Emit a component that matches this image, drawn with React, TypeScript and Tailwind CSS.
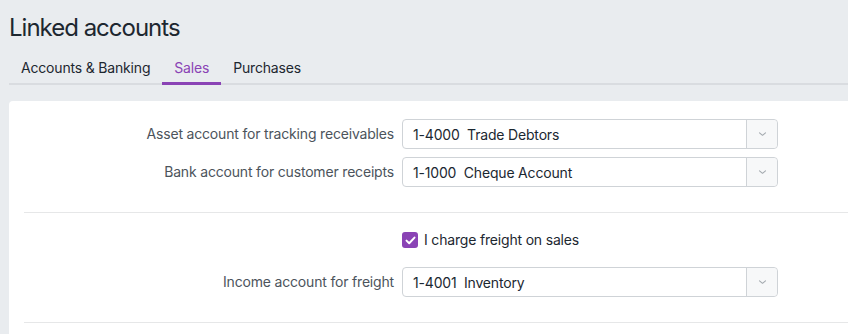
import React from "react";

const tabs = ["Accounts & Banking", "Sales", "Purchases"];

function Chevron() {
  return (
    <svg width="9" height="6" viewBox="0 0 9 6" fill="none">
      <path d="M1.5 1.8 L4.5 4.3 L7.5 1.8" stroke="#a3a9ae" strokeWidth="1.1" strokeLinecap="round" strokeLinejoin="round" />
    </svg>
  );
}

function Select({ value }: { value: string }) {
  return (
    <div className="flex h-[30px] w-[376px] items-stretch rounded-[4px] border border-[#cfd3d7] bg-white">
      <div className="flex flex-1 items-center whitespace-pre pl-[10px] text-[14px] text-[#1b2731]">{value}</div>
      <div className="flex w-[31px] items-center justify-center rounded-r-[4px] border-l border-[#cfd3d7] bg-[#f7f8f9]">
        <Chevron />
      </div>
    </div>
  );
}

function Row({ label, children }: { label?: string; children: React.ReactNode }) {
  return (
    <div className="flex items-center gap-2">
      <div className="w-[370px] text-right text-[14px] leading-[20px] text-[#4c545c]">{label}</div>
      {children}
    </div>
  );
}

export default function App() {
  return (
    <div
      className="h-[334px] w-[848px] overflow-hidden bg-[#e9ecef] pl-[9px] tracking-[-0.18px]"
      style={{ fontFamily: "Inter, 'Liberation Sans', sans-serif" }}
    >
      <h1 className="pt-[12px] text-[24px] leading-[32px] tracking-[-1px] text-[#1d2730]">Linked accounts</h1>
      <div className="mt-[14px] flex border-b-2 border-[#d9dce0]">
        {tabs.map((t) => (
          <div
            key={t}
            className={
              t === "Sales"
                ? "-mb-[2px] border-b-[3px] border-[#8a43b5] px-3 pb-[4px] text-[14px] leading-[20px] text-[#8a43b5]"
                : "-mb-[2px] border-b-[3px] border-transparent px-3 pb-[4px] text-[14px] leading-[20px] text-[#1d2730]"
            }
          >
            {t}
          </div>
        ))}
      </div>
      <div className="mt-[16px] h-[300px] rounded-tl-[4px] bg-white pl-[15px] pt-[18px]">
        <div className="flex flex-col gap-2">
          <Row label="Asset account for tracking receivables">
            <Select value="1-4000  Trade Debtors" />
          </Row>
          <Row label="Bank account for customer receipts">
            <Select value="1-1000  Cheque Account" />
          </Row>
        </div>
        <div className="mt-[25px] h-px bg-[#e6e7e8]" />
        <div className="mt-[17px]">
          <Row>
            <label className="flex h-[20px] items-center gap-[6px] text-[14px] leading-[20px] text-[#1d2730]">
              <span className="flex h-4 w-4 items-center justify-center rounded-[3px] bg-[#8a43b5]">
                <svg width="11" height="9" viewBox="0 0 11 9" fill="none">
                  <path d="M1.5 4.6 L4.2 7.2 L9.5 1.6" stroke="white" strokeWidth="2" strokeLinecap="round" strokeLinejoin="round" />
                </svg>
              </span>
              I charge freight on sales
            </label>
          </Row>
        </div>
        <div className="mt-[17px]">
          <Row label="Income account for freight">
            <Select value="1-4001  Inventory" />
          </Row>
        </div>
        <div className="mt-[25px] h-px bg-[#e6e7e8]" />
      </div>
    </div>
  );
}
